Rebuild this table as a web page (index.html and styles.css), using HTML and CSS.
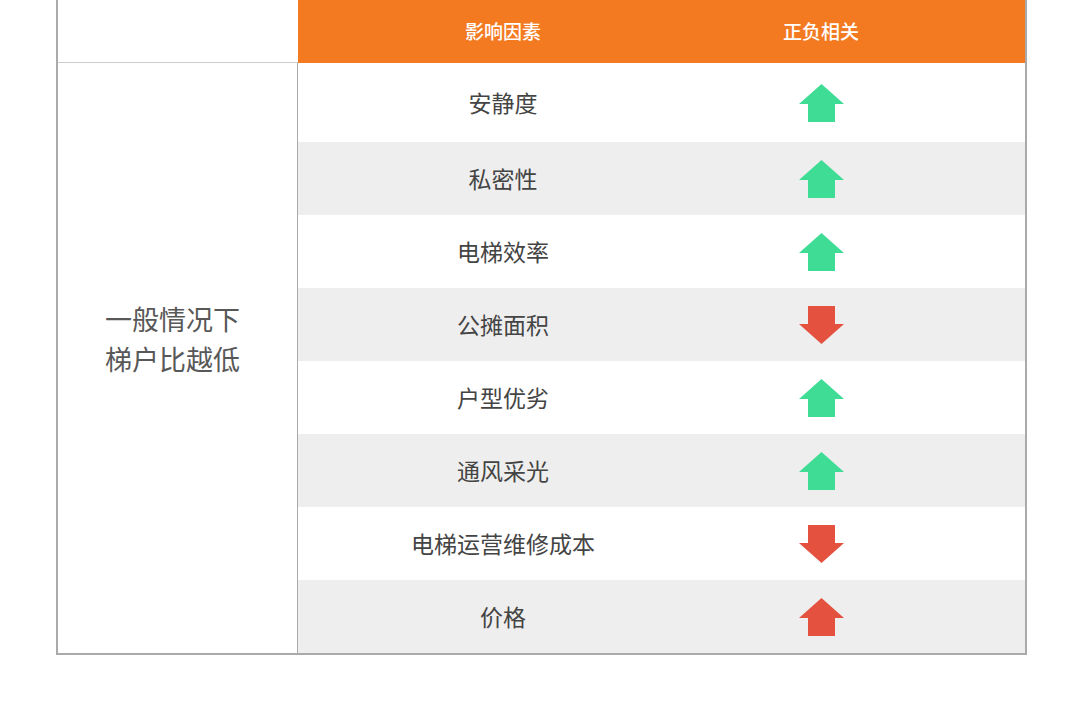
FILE: index.html
```html
<!DOCTYPE html>
<html lang="zh">
<head>
<meta charset="utf-8">
<link rel="stylesheet" href="styles.css">
</head>
<body>
<div class="table">
  <div class="left">
    <div class="left-head"></div>
    <div class="left-body">
      <div class="left-line">一般情况下</div>
      <div class="left-line">梯户比越低</div>
    </div>
  </div>
  <div class="right">
    <div class="row head">
      <div class="c1">影响因素</div>
      <div class="c2">正负相关</div>
    </div>
    <div class="row first">
      <div class="c1">安静度</div>
      <div class="c2"><svg class="arrow up" viewBox="0 0 45 38"><polygon points="22.5,0 45,20 36,20 36,38 9,38 9,20 0,20"/></svg></div>
    </div>
    <div class="row alt">
      <div class="c1">私密性</div>
      <div class="c2"><svg class="arrow up" viewBox="0 0 45 38"><polygon points="22.5,0 45,20 36,20 36,38 9,38 9,20 0,20"/></svg></div>
    </div>
    <div class="row">
      <div class="c1">电梯效率</div>
      <div class="c2"><svg class="arrow up" viewBox="0 0 45 38"><polygon points="22.5,0 45,20 36,20 36,38 9,38 9,20 0,20"/></svg></div>
    </div>
    <div class="row alt">
      <div class="c1">公摊面积</div>
      <div class="c2"><svg class="arrow down" viewBox="0 0 45 38"><polygon points="9,0 36,0 36,18 45,18 22.5,38 0,18 9,18"/></svg></div>
    </div>
    <div class="row">
      <div class="c1">户型优劣</div>
      <div class="c2"><svg class="arrow up" viewBox="0 0 45 38"><polygon points="22.5,0 45,20 36,20 36,38 9,38 9,20 0,20"/></svg></div>
    </div>
    <div class="row alt">
      <div class="c1">通风采光</div>
      <div class="c2"><svg class="arrow up" viewBox="0 0 45 38"><polygon points="22.5,0 45,20 36,20 36,38 9,38 9,20 0,20"/></svg></div>
    </div>
    <div class="row">
      <div class="c1">电梯运营维修成本</div>
      <div class="c2"><svg class="arrow down" viewBox="0 0 45 38"><polygon points="9,0 36,0 36,18 45,18 22.5,38 0,18 9,18"/></svg></div>
    </div>
    <div class="row alt">
      <div class="c1">价格</div>
      <div class="c2"><svg class="arrow up red" viewBox="0 0 45 38"><polygon points="22.5,0 45,20 36,20 36,38 9,38 9,20 0,20"/></svg></div>
    </div>
  </div>
</div>
</body>
</html>
```

FILE: styles.css
```css
html, body {
  margin: 0;
  padding: 0;
  background: #ffffff;
}
body {
  font-family: "Noto Sans CJK SC", "Noto Sans", sans-serif;
  width: 1080px;
  height: 701px;
  overflow: hidden;
}
.table {
  margin-left: 56px;
  width: 967px;
  display: flex;
  border-left: 2px solid #aaaaaa;
  border-right: 2px solid #aaaaaa;
  border-bottom: 2px solid #aaaaaa;
}
.left {
  width: 240px;
  display: flex;
  flex-direction: column;
}
.left-head {
  height: 63px;
  border-bottom: 1px solid #cccccc;
  box-sizing: border-box;
}
.left-body {
  flex: 1;
  display: flex;
  flex-direction: column;
  align-items: center;
  justify-content: center;
  font-size: 27px;
  color: #585858;
  border-right: 1px solid #aaaaaa;
  padding-bottom: 38px;
  padding-right: 10px;
}
.left-line {
  line-height: 40px;
  height: 40px;
  white-space: nowrap;
}
.right {
  flex: 1;
  display: flex;
  flex-direction: column;
}
.row {
  display: grid;
  grid-template-columns: 410px 226px 1fr;
  height: 73px;
  align-items: center;
  font-size: 23px;
  color: #444444;
}
.row.first {
  height: 79px;
}
.row.alt {
  background: #eeeeee;
}
.row.head {
  height: 63px;
  background: #f47a22;
  color: #ffffff;
  font-size: 19px;
  font-weight: 500;
}
.c1, .c2 {
  display: flex;
  justify-content: center;
  align-items: center;
}
.c1 {
  padding-bottom: 2px;
}
.head .c1, .head .c2 {
  padding-bottom: 2px;
}
.arrow {
  width: 45px;
  height: 38px;
  display: block;
}
.arrow.up {
  fill: #3fdc96;
}
.arrow.down,
.arrow.red {
  fill: #e5513f;
}
```
